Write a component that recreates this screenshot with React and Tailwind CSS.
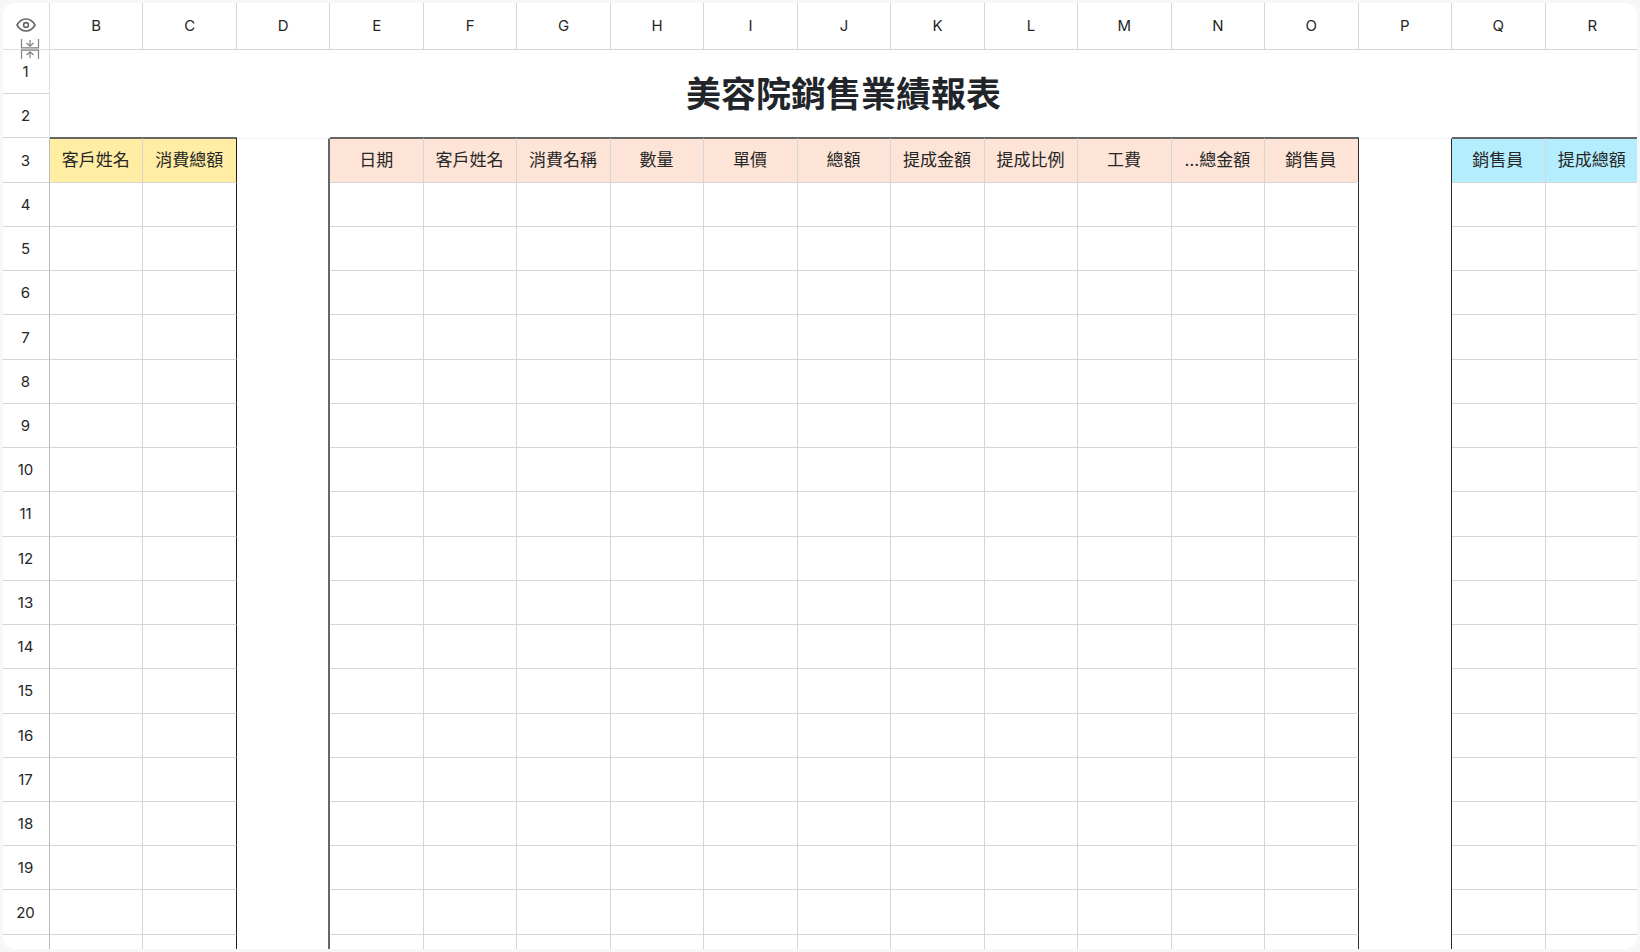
import clsx from 'clsx';

const columns = ['B', 'C', 'D', 'E', 'F', 'G', 'H', 'I', 'J', 'K', 'L', 'M', 'N', 'O', 'P', 'Q', 'R'];

const headings = {
    B: '客戶姓名',
    C: '消費總額',
    E: '日期',
    F: '客戶姓名',
    G: '消費名稱',
    H: '數量',
    I: '單價',
    J: '總額',
    K: '提成金額',
    L: '提成比例',
    M: '工費',
    N: '…總金額',
    O: '銷售員',
    Q: '銷售員',
    R: '提成總額'
};

const rows = Array.from({ length: 17 }, (_, i) => i + 4);

// D and P are the empty gutters between the three tables
const isGutter = (col) => col === 'D' || col === 'P';

const headingColor = (col) => {
    if (col < 'D') return 'bg-[#feeda3]';
    if (col < 'P') return 'bg-[#fde4d7]';
    return 'bg-[#b4eefe]';
};

const rightEdge = (col) => {
    if (col === 'C') return 'border-r border-r-[#1f1f1f]';
    if (col === 'D') return 'border-r-2 border-r-[#666666]';
    if (col === 'O' || col === 'P') return 'border-r border-r-[#2b2b2b]';
    if (col === 'R') return '';
    return 'border-r border-r-[#d6d6d6]';
};

const EyeIcon = () => (
    <svg width="20" height="14" viewBox="0 0 20 14" fill="none" stroke="#666666" strokeWidth="1.6" strokeLinejoin="round">
        <path d="M1 7C3.2 3 6.3 1 10 1s6.800 2 9 6c-2.200 4-5.300 6-9 6S3.200 11 1 7Z" />
        <circle cx="10" cy="7" r="2.400" />
    </svg>
);

const CollapseIcon = () => (
    <svg width="20" height="20" viewBox="0 0 20 20" fill="none" stroke="#808080" strokeWidth="1.200">
        <path d="M1.500 0v8.800h17V0M1.500 20v-8.800h17V20" />
        <path d="M10 1v6M6.500 4 10 7.200 13.500 4M10 19v-6M6.500 16 10 12.800 13.500 16" />
    </svg>
);

const RowNumber = ({ n }) => (
    <th
        scope="row"
        className={clsx(
            'h-11 border-r border-b border-b-[#d6d6d6] pr-px text-[15px] font-normal',
            n < 3 ? 'border-r-[#dedede]' : 'border-r-[#bababa]'
        )}
    >
        {n}
    </th>
);

const App = () => {
    return (
        <div className="h-screen bg-[#f7f7f7] p-[3px]">
            <div className="h-full overflow-hidden rounded-xl bg-white">
                <table className="h-full w-[calc(100%+2px)] table-fixed border-separate border-spacing-0 text-center font-['Inter','Noto_Sans_CJK_TC',sans-serif] leading-none text-[#262626]">
                    <colgroup>
                        <col className="w-[47px]" />
                        {columns.map((col) => <col key={col} />)}
                    </colgroup>
                    <thead>
                        <tr>
                            <td className="relative h-[47px] border-r border-b border-[#dedede] pr-px pb-0.5">
                                <button aria-label="顯示" className="mx-auto flex w-5 justify-center">
                                    <EyeIcon />
                                </button>
                                <button aria-label="收合" className="absolute right-[9px] -bottom-[10px]">
                                    <CollapseIcon />
                                </button>
                            </td>
                            {columns.map((col) => (
                                <th
                                    key={col}
                                    scope="col"
                                    className="border-r border-b border-[#d6d6d6] pb-0.5 text-[15px] font-normal last:border-r-0"
                                >
                                    {col}
                                </th>
                            ))}
                        </tr>
                    </thead>
                    <tbody>
                        {/* Title */}
                        <tr>
                            <RowNumber n={1} />
                            <td colSpan={17} rowSpan={2} className="pr-0.5">
                                <h1 className="text-[35px] leading-none font-bold text-[#212529]">美容院銷售業績報表</h1>
                            </td>
                        </tr>
                        <tr>
                            <RowNumber n={2} />
                        </tr>

                        {/* Table headings */}
                        <tr>
                            <RowNumber n={3} />
                            {columns.map((col) => (
                                <td
                                    key={col}
                                    className={clsx(
                                        'pr-px text-[17px] whitespace-nowrap',
                                        rightEdge(col),
                                        isGutter(col)
                                            ? 'border-t border-t-[#f3f3f3]'
                                            : [
                                                  'border-t border-b border-t-[#666666] border-b-[#d6d6d6] shadow-[0_-1px_0_#666666]',
                                                  headingColor(col)
                                              ]
                                    )}
                                >
                                    {headings[col]}
                                </td>
                            ))}
                        </tr>

                        {rows.map((n) => (
                            <tr key={n}>
                                <RowNumber n={n} />
                                {columns.map((col) => (
                                    <td
                                        key={col}
                                        className={clsx(rightEdge(col), !isGutter(col) && 'border-b border-b-[#d6d6d6]')}
                                    ></td>
                                ))}
                            </tr>
                        ))}

                        {/* Start of the next row, cut off by the frame */}
                        <tr>
                            <td className="h-3.5 border-r border-r-[#bababa]"></td>
                            {columns.map((col) => (
                                <td key={col} className={rightEdge(col)}></td>
                            ))}
                        </tr>
                    </tbody>
                </table>
            </div>
        </div>
    );
};

export default App;
